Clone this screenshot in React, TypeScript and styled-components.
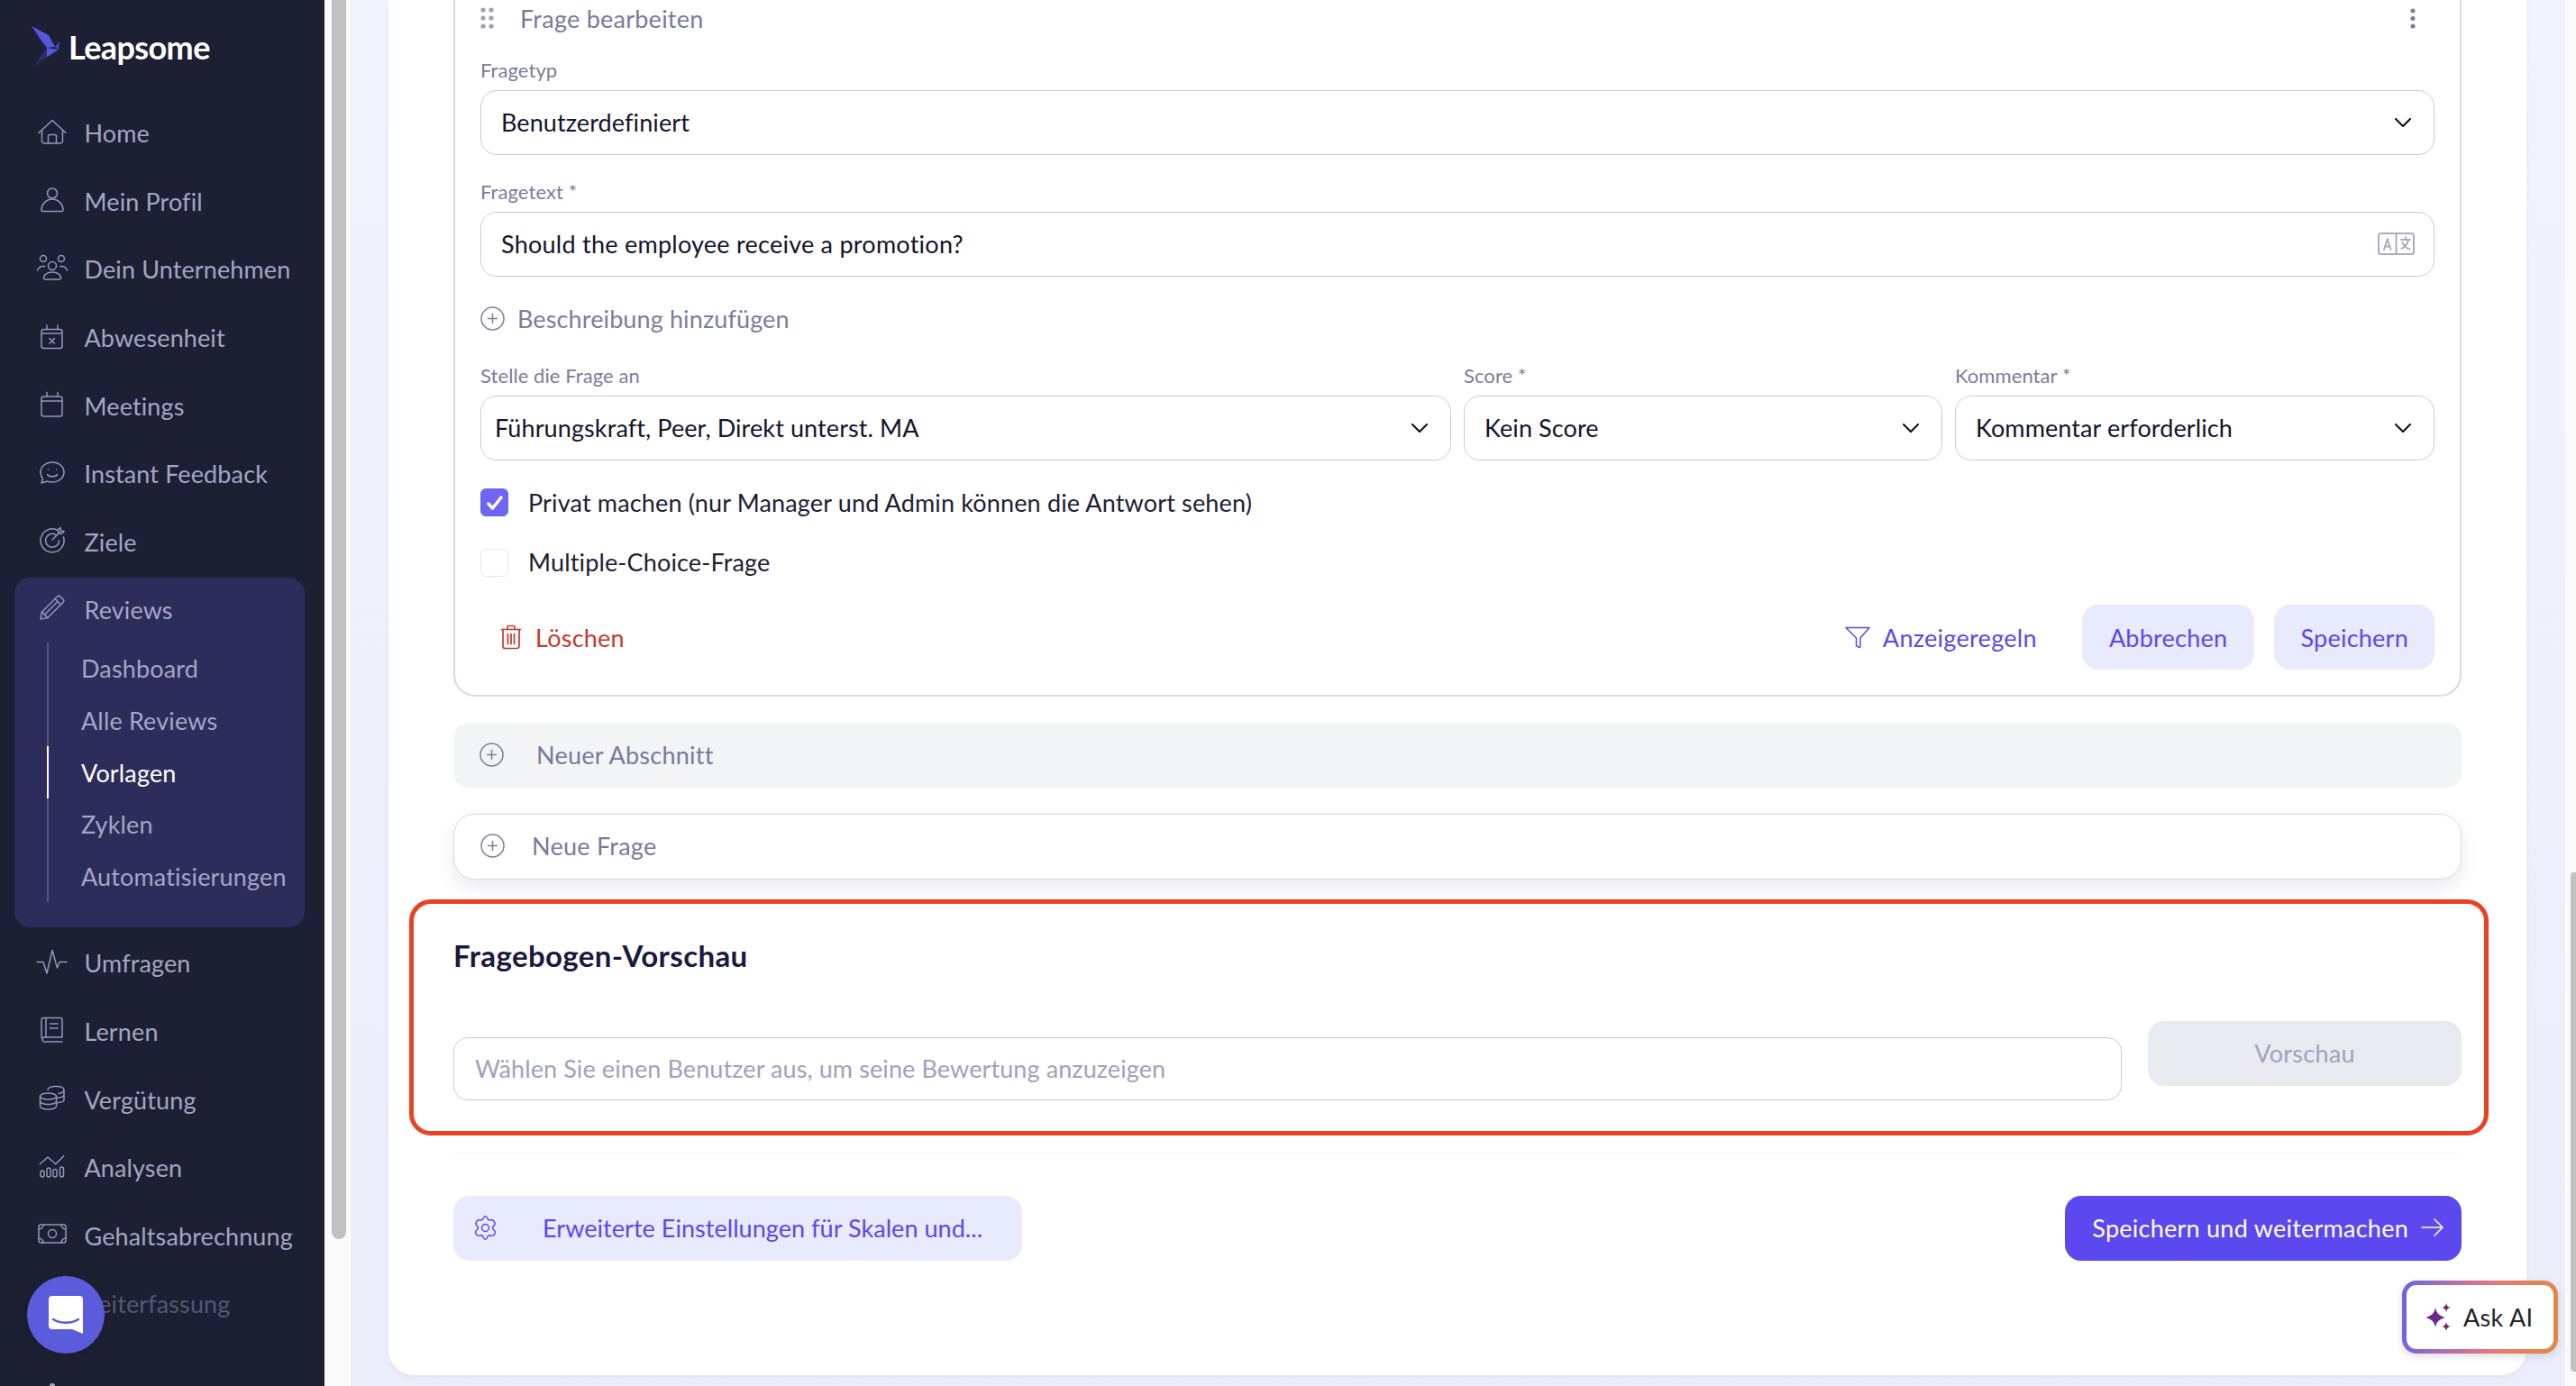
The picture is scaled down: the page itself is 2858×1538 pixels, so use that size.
import React from 'react';
import styled, { createGlobalStyle } from 'styled-components';

const GlobalStyle = createGlobalStyle`
  * { box-sizing: border-box; }
  html, body { margin: 0; padding: 0; background: #fff; }
  body { font-family: 'Lato', 'Liberation Sans', sans-serif; }
`;

const Page = styled.div`
  position: relative;
  display: flex;
  width: 2858px;
  height: 1538px;
  overflow: hidden;
`;

/* sidebar */
const Sidebar = styled.aside`
  width: 360px;
  height: 100%;
  flex: none;
  overflow: hidden;
  background: #1d2033;
`;

const LogoRow = styled.div`
  display: flex;
  align-items: flex-start;
  gap: 8px;
  height: 110px;
  padding: 28px 0 0 34px;
`;

const LogoText = styled.span`
  margin-top: 4px;
  color: #fff;
  font-size: 36px;
  line-height: 40px;
  font-weight: 700;
  letter-spacing: -0.6px;
`;

const NavRow = styled.div<{ $dim?: boolean; $height?: number }>`
  display: flex;
  align-items: center;
  gap: 17.5px;
  height: ${(p) => p.$height ?? 75.6}px;
  padding-left: 40px;
  color: ${(p) => (p.$dim ? '#56586e' : '#a4a6c2')};
  font-size: 27px;
  letter-spacing: 0.12px;
`;

const NavIcon = styled.svg`
  width: 36px;
  height: 36px;
  flex: none;
  margin-bottom: 4px;
  fill: none;
  stroke: #9496b4;
  stroke-width: 1.5;
  stroke-linecap: round;
  stroke-linejoin: round;
`;

const ReviewsPanel = styled.div`
  margin: 2px 22px 2px 16px;
  padding-bottom: 28px;
  border-radius: 18px;
  background: #2d2d5b;
`;

const PanelHead = styled(NavRow)`
  padding-left: 24px;
  padding-bottom: 2px;
`;

const SubList = styled.div`
  margin-left: 36px;
`;

const SubItem = styled.div<{ $active?: boolean }>`
  display: flex;
  align-items: center;
  height: 57.6px;
  padding-left: 36px;
  border-left: 2px solid ${(p) => (p.$active ? '#fff' : '#55567e')};
  color: ${(p) => (p.$active ? '#fff' : '#a4a6c2')};
  font-size: 27px;
  letter-spacing: 0.15px;
`;

const NavPeek = styled.div`
  width: 6px;
  height: 6px;
  margin: 50px 0 0 55px;
  border-radius: 50%;
  background: #a4a6c2;
`;

const SideGutter = styled.div`
  width: 30px;
  height: 100%;
  flex: none;
  padding-left: 8px;
  background: #fafafa;
  border-right: 1px solid #f0f0f2;
`;

const GutterThumb = styled.div`
  width: 16px;
  height: 1375px;
  border-radius: 0 0 8px 8px;
  background: #c1c1c1;
`;

const ChatBubble = styled.div`
  position: absolute;
  left: 30px;
  top: 1416px;
  display: flex;
  align-items: center;
  justify-content: center;
  width: 86px;
  height: 86px;
  border-radius: 50%;
  background: #5a5cdc;
  box-shadow: 0 2px 24px rgba(0, 0, 0, 0.12);
`;

/* main */
const Main = styled.main`
  flex: 1;
  height: 100%;
  padding: 0 42px 0 41px;
  background: linear-gradient(180deg, #f1f3fd 0%, #ecedfb 100%);
`;

const Card = styled.div`
  display: flow-root;
  height: 1526px;
  padding: 0 72px;
  border-radius: 0 0 28px 28px;
  background: #fff;
  box-shadow: 0 2px 6px rgba(90, 90, 180, 0.08);
`;

const QuestionCard = styled.section`
  display: flex;
  flex-direction: column;
  margin-top: -41px;
  height: 814px;
  padding: 42px 28px 0;
  border: 2px solid #d9dae5;
  border-top: none;
  border-radius: 24px;
`;

const QuestionHead = styled.div`
  display: flex;
  align-items: center;
  height: 40px;
  margin-bottom: 23px;
  color: #787a9b;
  font-size: 27px;
  letter-spacing: 0.25px;
`;

const HeadTitle = styled.span`
  flex: 1;
  margin-left: 24px;
  padding-bottom: 2px;
`;

const Label = styled.div`
  height: 28px;
  margin-bottom: 8px;
  color: #7b7d9b;
  font-size: 22px;
  line-height: 28px;
  letter-spacing: 0.08px;
`;

const Select = styled.div<{ $padLeft?: number }>`
  display: flex;
  align-items: center;
  justify-content: space-between;
  height: 72px;
  padding: 0 25px 1px ${(p) => p.$padLeft ?? 22}px;
  border: 1.5px solid #c9cadb;
  border-radius: 18px;
  background: #fff;
  color: #14142b;
  font-size: 27px;
  letter-spacing: 0.1px;
`;

const TextField = styled(Select)`
  margin-bottom: 32px;
  padding-right: 21px;
  letter-spacing: 0.25px;
`;

const FieldBlock = styled.div`
  margin-bottom: 27px;
`;

const AddLink = styled.div`
  display: flex;
  align-items: center;
  gap: 14px;
  height: 30px;
  margin-bottom: 34px;
  padding-bottom: 2px;
  color: #7b7d9b;
  font-size: 27px;
  letter-spacing: 0.12px;
`;

const TripleRow = styled.div`
  display: grid;
  grid-template-columns: 1077fr 531fr 532fr;
  gap: 14px;
  margin-bottom: 31px;
`;

const CheckRow = styled.label`
  display: flex;
  align-items: center;
  gap: 22px;
  height: 31px;
  margin-bottom: 36px;
  color: #1d2033;
  font-size: 27px;
  letter-spacing: 0.15px;
`;

const CheckText = styled.span<{ $lift?: number }>`
  padding-bottom: ${(p) => p.$lift ?? 0}px;
`;

const CheckBox = styled.span<{ $checked?: boolean }>`
  display: flex;
  align-items: center;
  justify-content: center;
  width: 31px;
  height: 31px;
  border-radius: 6px;
  border: 1.5px solid ${(p) => (p.$checked ? '#6d66f2' : '#e4e5ed')};
  background: ${(p) => (p.$checked ? '#6d66f2' : '#fff')};
`;

const ActionRow = styled.div`
  display: flex;
  align-items: center;
  height: 72px;
  margin-top: -5px;
`;

const DeleteLink = styled.div`
  display: flex;
  align-items: center;
  gap: 15px;
  flex: 1;
  padding-left: 22px;
  color: #c43a2f;
  font-size: 27px;
  letter-spacing: 0.25px;
`;

const RulesLink = styled.div`
  display: flex;
  align-items: center;
  gap: 14px;
  margin-right: 50px;
  color: #5b48ee;
  font-size: 27px;
  letter-spacing: 0.3px;
`;

const SoftButton = styled.button<{ $pad: number }>`
  height: 72px;
  padding: 0 ${(p) => p.$pad}px;
  border: none;
  border-radius: 18px;
  background: #e8eafd;
  color: #5b48ee;
  font: inherit;
  font-size: 27px;
  letter-spacing: 0.25px;

  & + & {
    margin-left: 22px;
  }
`;

const SectionBar = styled.div`
  display: flex;
  align-items: center;
  height: 72px;
  margin-top: 29px;
  padding: 0 0 2px 29px;
  gap: 36px;
  border-radius: 16px;
  background: #f3f4f6;
  color: #787a9b;
  font-size: 27px;
  letter-spacing: 0.25px;
`;

const NewQuestion = styled(SectionBar)`
  height: 73px;
  gap: 30px;
  border: 1.5px solid #dadbe6;
  border-radius: 24px;
  background: #fff;
  box-shadow: 0 8px 20px rgba(40, 40, 90, 0.1);
`;

const PreviewSection = styled.section`
  position: relative;
  margin-top: 31px;
  padding: 34px 0 58px;
  border-top: 1px solid #f6f6f8;
  border-bottom: 1px solid #f6f6f8;
`;

const PreviewTitle = styled.h2`
  height: 40px;
  margin: 0 0 51px;
  padding-bottom: 2px;
  color: #1a1a40;
  font-size: 33px;
  line-height: 36px;
  font-weight: 700;
  letter-spacing: 0.4px;
`;

const PreviewRow = styled.div`
  display: flex;
  align-items: flex-start;
  gap: 29px;
`;

const UserInput = styled.div`
  flex: 1;
  display: flex;
  align-items: center;
  height: 70px;
  margin-top: 18px;
  padding: 0 0 2px 23px;
  border: 1.5px solid #c9cadb;
  border-radius: 16px;
  color: #a0a2bb;
  font-size: 27px;
  letter-spacing: 0.1px;
`;

const PreviewButton = styled.button`
  width: 348px;
  height: 72px;
  padding: 0 0 2px;
  border: none;
  border-radius: 18px;
  background: #e9eaf0;
  color: #a0a2bb;
  font: inherit;
  font-size: 27px;
  letter-spacing: 0.25px;
`;

const Annotation = styled.div`
  position: absolute;
  left: -49px;
  top: -10px;
  width: 2307px;
  height: 262px;
  border: 5px solid #ea4125;
  border-radius: 24px;
  pointer-events: none;
`;

const FooterRow = styled.div`
  display: flex;
  align-items: center;
  justify-content: space-between;
  margin-top: 47px;
`;

const SettingsButton = styled.button`
  display: flex;
  align-items: center;
  gap: 50px;
  height: 72px;
  padding: 0 44px 2px 22px;
  border: none;
  border-radius: 18px;
  background: #e8eafd;
  color: #5b48ee;
  font: inherit;
  font-size: 27px;
  letter-spacing: 0.05px;
`;

const SaveButton = styled.button`
  display: flex;
  align-items: center;
  gap: 14px;
  height: 72px;
  padding: 0 20px 2px 30px;
  border: none;
  border-radius: 18px;
  background: #5b48ee;
  color: #fff;
  font: inherit;
  font-size: 27px;
  letter-spacing: 0.25px;
`;

const AskAi = styled.div`
  position: absolute;
  left: 2665px;
  top: 1421px;
  display: flex;
  align-items: center;
  gap: 13px;
  width: 173px;
  height: 81px;
  padding-left: 20px;
  border: 5px solid transparent;
  border-radius: 16px;
  background:
    linear-gradient(#fff, #fff) padding-box,
    linear-gradient(95deg, #6b62e8 0%, #b06fb0 30%, #e87a78 60%, #de8a42 100%) border-box;
  box-shadow: 0 3px 8px rgba(50, 50, 90, 0.16);
  color: #25252b;
  font-size: 27px;
  letter-spacing: 0.3px;
`;

const RightTrack = styled.div`
  width: 13px;
  height: 100%;
  flex: none;
  padding: 968px 0 0 6px;
  background: #fafafa;
  border-left: 1px solid #f0f0f2;
`;

const RightThumb = styled.div`
  width: 6px;
  height: 554px;
  border-radius: 4px 0 0 4px;
  background: #c1c1c1;
`;

const Stroke = styled.svg<{ $color: string; $w?: number }>`
  flex: none;
  fill: none;
  stroke: ${(p) => p.$color};
  stroke-width: ${(p) => p.$w ?? 1.5};
  stroke-linecap: round;
  stroke-linejoin: round;
`;

const KebabSvg = styled.svg`
  margin-right: 21px;
  fill: #7b7d9b;
`;

/* drawings */
const LeapsomeMark = () => (
  <svg width="34" height="46" viewBox="0 0 34 46">
    <polygon points="1,1 20,11 27,24 18,25" fill="#5457da" />
    <polygon points="1,1 18,25 13,20" fill="#3b3d9e" />
    <polygon points="27,24 32,18 31,27" fill="#4a4cc4" />
    <polygon points="18,25 31,27 17,36" fill="#5558de" />
    <polygon points="17,25 18,36 4,45" fill="#2c2d66" />
  </svg>
);

const navIcons: Record<string, React.ReactNode> = {
  Home: (
    <>
      <path d="M3 19.5 18 5.5l15 14" />
      <path d="M6.5 16.5v12A2.5 2.5 0 0 0 9 31h18a2.5 2.5 0 0 0 2.5-2.5v-12" />
      <path d="M13.5 31v-8a1.5 1.5 0 0 1 1.5-1.5h6a1.5 1.5 0 0 1 1.5 1.5v8" />
    </>
  ),
  'Mein Profil': (
    <>
      <circle cx="18" cy="11.5" r="5.5" />
      <path d="M7.5 31.5h21A1.5 1.5 0 0 0 30 30c0-6-5-12-12-12S6 24 6 30a1.5 1.5 0 0 0 1.5 1.5z" />
    </>
  ),
  'Dein Unternehmen': (
    <>
      <circle cx="18" cy="16" r="4.5" />
      <circle cx="8" cy="8" r="3.5" />
      <circle cx="28" cy="8" r="3.5" />
      <path d="M10 31h16a1.5 1.5 0 0 0 1.5-1.5c0-3.5-4-6.5-9.5-6.5s-9.5 3-9.5 6.5A1.5 1.5 0 0 0 10 31z" />
      <path d="M1.5 21c1-3 4-5 8-4.5M34.5 21c-1-3-4-5-8-4.5" />
    </>
  ),
  Abwesenheit: (
    <>
      <rect x="6" y="10.5" width="23" height="21" rx="2.5" />
      <path d="M12 6v4.5M24 6v4.5M6 15h23M15 20.5l5.5 5.5M20.5 20.5 15 26" />
    </>
  ),
  Meetings: (
    <>
      <rect x="6" y="10" width="23" height="22" rx="2.5" />
      <path d="M12 5.5V10M24 5.5V10M6 15h23" />
    </>
  ),
  'Instant Feedback': (
    <>
      <path d="M18 7c7.5 0 13 5 13 11s-5.5 11-13 11c-2 0-4-.3-5.5-1L6 30l1.5-5C5.5 23 5 20.5 5 18 5 12 10.5 7 18 7z" />
      <path d="M13.5 15v.1M22.5 15v.1M12.5 20.5c2 3 9 3 11 0" />
    </>
  ),
  Ziele: (
    <>
      <path d="M24.5 7.5A13 13 0 1 0 30.5 15" />
      <path d="M22 12.5A7.5 7.5 0 1 0 25.5 19" />
      <path d="M18 18 27 9M24.5 10V6.5l2.5-2 .5 3.5 3.5.5-2 2.5h-3.5" />
    </>
  ),
  Reviews: (
    <>
      <path d="m5 31 1.5-8L23.5 6a2.5 2.5 0 0 1 3.5 0l3 3a2.5 2.5 0 0 1 0 3.5L13 29.5z" />
      <path d="m6.5 23 6.5 6.5M21 8.5l6.5 6.5M9.5 26 24 11.5" />
    </>
  ),
  Umfragen: <path d="M1 18.5h7L12 31l6-25.5L23.5 25l2.5-6.5h8" />,
  Lernen: (
    <>
      <path d="M6 26.5V7a2.5 2.5 0 0 1 2.5-2.5H27a2 2 0 0 1 2 2V26H9.5a2.5 2.5 0 0 0 0 5H29" />
      <path d="M11 4.5V26M15.5 11H24M15.5 16H24" />
    </>
  ),
  'Vergütung': (
    <>
      <ellipse cx="13.5" cy="16.5" rx="9" ry="3.5" />
      <path d="M4.5 16.5v11c0 2 4 3.5 9 3.5s9-1.5 9-3.5v-11M4.5 22c0 2 4 3.5 9 3.5s9-1.5 9-3.5" />
      <path d="M13 9.5C13 7 17 5.5 22 5.5s9 1.5 9 4-2.5 3.5-6 3.9M31 9.5v11c0 1.5-3 3-8.5 3.2M31 15c0 1.5-3 3-8.5 3.2" />
    </>
  ),
  Analysen: (
    <>
      <path d="M4.3 15.7 13 8l8.7 7.7 9-9" />
      <rect x="5" y="23" width="4" height="7" rx="2" />
      <rect x="12" y="20" width="4" height="10" rx="2" />
      <rect x="19" y="21.5" width="4" height="8.5" rx="2" />
      <rect x="26.5" y="19" width="4" height="11" rx="2" />
    </>
  ),
  Gehaltsabrechnung: (
    <>
      <rect x="3" y="8" width="30" height="20" rx="2.5" />
      <circle cx="18" cy="18" r="4.5" />
      <path d="M3 13a5 5 0 0 0 5-5M28 8a5 5 0 0 0 5 5M33 23a5 5 0 0 0-5 5M8 28a5 5 0 0 0-5-5" />
    </>
  ),
  Zeiterfassung: <circle cx="18" cy="18" r="13" />,
};

const NavIconFor = ({ name }: { name: string }) => (
  <NavIcon viewBox="0 0 36 36">{navIcons[name]}</NavIcon>
);

const PlusCircle = () => (
  <Stroke width="27" height="27" viewBox="0 0 27 27" $color="#7b7d9b">
    <circle cx="13.5" cy="13.5" r="12.5" />
    <path d="M13.5 8.5v10M8.5 13.5h10" />
  </Stroke>
);

const Chevron = () => (
  <Stroke width="18" height="10" viewBox="0 0 18 10" $color="#0c0c14" $w={2}>
    <path d="m1 1 8 8 8-8" />
  </Stroke>
);

const GripIcon = () => (
  <svg width="20" height="26" viewBox="0 0 20 26" fill="#9ea0bb">
    {[3, 12].map((cx) =>
      [3, 12, 21].map((cy) => <circle key={`${cx}-${cy}`} cx={cx} cy={cy} r="2.6" />),
    )}
  </svg>
);

const KebabIcon = () => (
  <KebabSvg width="6" height="24" viewBox="0 0 6 24">
    <circle cx="3" cy="3" r="2.5" />
    <circle cx="3" cy="11.5" r="2.5" />
    <circle cx="3" cy="20" r="2.5" />
  </KebabSvg>
);

const TranslateIcon = () => (
  <Stroke width="41" height="25" viewBox="0 0 41 25" $color="#aaacc6" $w={2}>
    <rect x="1" y="1" width="39" height="23" rx="2.5" />
    <path d="M20.5 1v23" />
    <path d="m7 19 3.8-12L14.5 19M8.3 15.5h5" />
    <path d="M26 8h10M31 5.5V8M34 8c-1 5-4 8-7.5 10M27.5 11c1.5 4 4.5 6.5 8 7.5" />
  </Stroke>
);

const TrashIcon = () => (
  <Stroke width="24" height="28" viewBox="0 0 24 28" $color="#c43a2f" $w={1.7}>
    <path d="M1.5 5.5h21M8 5.5V3a1.5 1.5 0 0 1 1.5-1.5h5A1.5 1.5 0 0 1 16 3v2.5" />
    <path d="M3 5.5V24a2.5 2.5 0 0 0 2.5 2.5h13A2.5 2.5 0 0 0 21 24V5.5" />
    <path d="M8.5 10.5v11M12 10.5v11M15.5 10.5v11" />
  </Stroke>
);

const FunnelIcon = () => (
  <Stroke width="28" height="25" viewBox="0 0 28 25" $color="#5b48ee">
    <path d="M1 1.5h26L17 13v9.5a1 1 0 0 1-1.5.8l-3-1.800V13z" />
  </Stroke>
);

const GearIcon = () => (
  <Stroke width="27" height="29" viewBox="0 0 27 29" $color="#5b48ee">
    <circle cx="13.5" cy="14.5" r="4" />
    <path d="M13.5 1.5c1.8 0 2.2 3.5 3.5 4.2s4.3-1 5.5.8 1.9 3 1.700 3.700c-.3 1.500-2.700 2.300-2.700 4.300s2.800 2.700 3 4.300-1 2.900-1.800 3.900c-1 1.200-4.400-.4-5.700.3s-1.700 4.500-3.500 4.500-2.300-3.800-3.500-4.500-4.600.9-5.700-.3c-1-1-2-2.300-1.800-3.900s3-2.300 3-4.300-2.400-2.800-2.700-4.300c-.2-.7.6-2 1.700-3.700s4.200 0 5.500-.8 1.700-4.200 3.500-4.200z" />
  </Stroke>
);

const ArrowIcon = () => (
  <Stroke width="25" height="20" viewBox="0 0 25 20" $color="#fff">
    <path d="M1 10h23M15 1l9 9-9 9" />
  </Stroke>
);

const SparkleIcon = () => (
  <svg width="30" height="34" viewBox="0 0 30 34">
    <path d="M12 6c1.5 6.500 4 9 11 11-7 2-9.500 4.500-11 11-1.500-6.500-4-9-11-11 7-2 9.500-4.500 11-11z" fill="#6a2a90" />
    <path d="M24 1c.6 3.200 1.800 4.400 5 5-3.200.6-4.400 1.800-5 5-.6-3.200-1.800-4.400-5-5 3.200-.6 4.400-1.800 5-5z" fill="#7d2260" />
    <path d="M24 22c.6 3.200 1.800 4.400 5 5-3.200.6-4.400 1.800-5 5-.6-3.200-1.800-4.400-5-5 3.200-.6 4.400-1.800 5-5z" fill="#7d2260" />
  </svg>
);

const ChatIcon = () => (
  <svg width="40" height="44" viewBox="0 0 40 44">
    <path d="M5 1h30a4 4 0 0 1 4 4v38l-12-5H5a4 4 0 0 1-4-4V5a4 4 0 0 1 4-4z" fill="#fff" />
    <path d="M6 27c8 5 20 5 28 0" fill="none" stroke="#5a5cdc" strokeWidth="2.5" strokeLinecap="round" />
  </svg>
);

const CheckMark = () => (
  <Stroke width="18" height="16" viewBox="0 0 18 16" $color="#fff" $w={3.5}>
    <path d="m2 9 4.5 5L16 2" />
  </Stroke>
);

const topItems = [
  'Home',
  'Mein Profil',
  'Dein Unternehmen',
  'Abwesenheit',
  'Meetings',
  'Instant Feedback',
  'Ziele',
];
const reviewItems = ['Dashboard', 'Alle Reviews', 'Vorlagen', 'Zyklen', 'Automatisierungen'];
const lowerItems = ['Umfragen', 'Lernen', 'Vergütung', 'Analysen', 'Gehaltsabrechnung'];

export default function App() {
  return (
    <Page>
      <GlobalStyle />
      <Sidebar>
        <LogoRow>
          <LeapsomeMark />
          <LogoText>Leapsome</LogoText>
        </LogoRow>
        {topItems.map((name) => (
          <NavRow key={name}>
            <NavIconFor name={name} />
            {name}
          </NavRow>
        ))}
        <ReviewsPanel>
          <PanelHead $height={72}>
            <NavIconFor name="Reviews" />
            Reviews
          </PanelHead>
          <SubList>
            {reviewItems.map((name) => (
              <SubItem key={name} $active={name === 'Vorlagen'}>
                {name}
              </SubItem>
            ))}
          </SubList>
        </ReviewsPanel>
        {lowerItems.map((name) => (
          <NavRow key={name}>
            <NavIconFor name={name} />
            {name}
          </NavRow>
        ))}
        <NavRow $dim>
          <NavIconFor name="Zeiterfassung" />
          Zeiterfassung
        </NavRow>
        <NavPeek />
      </Sidebar>
      <SideGutter>
        <GutterThumb />
      </SideGutter>

      <Main>
        <Card>
          <QuestionCard>
            <QuestionHead>
              <GripIcon />
              <HeadTitle>Frage bearbeiten</HeadTitle>
              <KebabIcon />
            </QuestionHead>
            <FieldBlock>
              <Label>Fragetyp</Label>
              <Select>
                Benutzerdefiniert
                <Chevron />
              </Select>
            </FieldBlock>
            <Label>Fragetext *</Label>
            <TextField>
              Should the employee receive a promotion?
              <TranslateIcon />
            </TextField>
            <AddLink>
              <PlusCircle />
              Beschreibung hinzufügen
            </AddLink>
            <TripleRow>
              <div>
                <Label>Stelle die Frage an</Label>
                <Select $padLeft={15}>
                  Führungskraft, Peer, Direkt unterst. MA
                  <Chevron />
                </Select>
              </div>
              <div>
                <Label>Score *</Label>
                <Select>
                  Kein Score
                  <Chevron />
                </Select>
              </div>
              <div>
                <Label>Kommentar *</Label>
                <Select>
                  Kommentar erforderlich
                  <Chevron />
                </Select>
              </div>
            </TripleRow>
            <CheckRow>
              <CheckBox $checked>
                <CheckMark />
              </CheckBox>
              <CheckText>Privat machen (nur Manager und Admin können die Antwort sehen)</CheckText>
            </CheckRow>
            <CheckRow>
              <CheckBox />
              <CheckText $lift={3}>Multiple-Choice-Frage</CheckText>
            </CheckRow>
            <ActionRow>
              <DeleteLink>
                <TrashIcon />
                Löschen
              </DeleteLink>
              <RulesLink>
                <FunnelIcon />
                Anzeigeregeln
              </RulesLink>
              <SoftButton $pad={30}>Abbrechen</SoftButton>
              <SoftButton $pad={29}>Speichern</SoftButton>
            </ActionRow>
          </QuestionCard>

          <SectionBar>
            <PlusCircle />
            Neuer Abschnitt
          </SectionBar>
          <NewQuestion>
            <PlusCircle />
            Neue Frage
          </NewQuestion>

          <PreviewSection>
            <PreviewTitle>Fragebogen-Vorschau</PreviewTitle>
            <PreviewRow>
              <UserInput>Wählen Sie einen Benutzer aus, um seine Bewertung anzuzeigen</UserInput>
              <PreviewButton>Vorschau</PreviewButton>
            </PreviewRow>
            <Annotation />
          </PreviewSection>

          <FooterRow>
            <SettingsButton>
              <GearIcon />
              Erweiterte Einstellungen für Skalen und...
            </SettingsButton>
            <SaveButton>
              Speichern und weitermachen
              <ArrowIcon />
            </SaveButton>
          </FooterRow>
        </Card>
      </Main>
      <RightTrack>
        <RightThumb />
      </RightTrack>

      <ChatBubble>
        <ChatIcon />
      </ChatBubble>
      <AskAi>
        <SparkleIcon />
        Ask AI
      </AskAi>
    </Page>
  );
}
